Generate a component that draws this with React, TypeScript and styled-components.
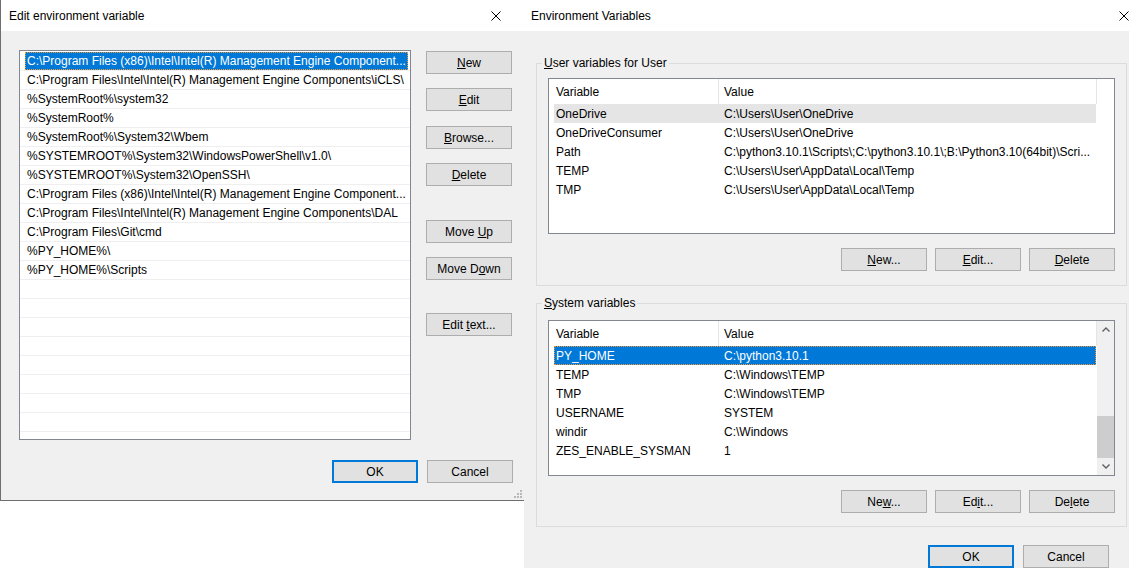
import * as React from 'react';
import styled, { createGlobalStyle, css } from 'styled-components';

const SANS = `"Liberation Sans", Arial, sans-serif`;

const GlobalStyle = createGlobalStyle`
  html, body {
    margin: 0;
    padding: 0;
    background: #fff;
    overflow: hidden;
  }
  body {
    font-family: ${SANS};
    font-size: 12px;
    color: #000;
  }
`;

const Desktop = styled.div`
  display: flex;
  align-items: flex-start;
  width: 1129px;
  height: 568px;
  overflow: hidden;
`;

/* ---------- shared window parts ---------- */

const TitleBar = styled.div<{ $padLeft: number; $padRight: number }>`
  height: 31px;
  flex: none;
  display: flex;
  align-items: center;
  justify-content: space-between;
  background: #fff;
  padding: 0 ${p => p.$padRight}px 0 ${p => p.$padLeft}px;
`;

const TitleText = styled.span`
  font-size: 12px;
  white-space: nowrap;
`;

const CloseGlyph = () => (
  <svg width="10" height="10" viewBox="0 0 10 10">
    <path d="M0.5 0.5 L9.5 9.5 M9.5 0.5 L0.5 9.5" stroke="#000" strokeWidth="1" fill="none" />
  </svg>
);

const Button = styled.button<{ $default?: boolean; $gapBefore?: number }>`
  width: 86px;
  height: 23px;
  flex: none;
  box-sizing: border-box;
  margin: ${p => p.$gapBefore ?? 0}px 0 0 0;
  padding: 0;
  background: #e1e1e1;
  border: 1px solid #adadad;
  color: #000;
  font-family: inherit;
  font-size: 12px;
  line-height: 1;
  ${p =>
    p.$default &&
    css`
      border: 2px solid #0078d7;
    `}
`;

const U = styled.span`
  text-decoration: underline;
  text-underline-offset: 1px;
`;

/* ---------- Edit environment variable ---------- */

const EditDialog = styled.div`
  width: 524px;
  flex: none;
  box-sizing: border-box;
  display: flex;
  flex-direction: column;
  border-left: 1px solid #6f6f6f;
  border-bottom: 1px solid #6f6f6f;
`;

const EditBody = styled.div`
  position: relative;
  height: 469px;
  box-sizing: border-box;
  background: #f0f0f0;
  padding: 19px 11px 0 18px;
`;

const EditMain = styled.div`
  display: flex;
  gap: 15px;
`;

const PathList = styled.div`
  width: 392px;
  height: 390px;
  box-sizing: border-box;
  border: 1px solid #828790;
  background: #fff;
  padding-top: 1px;
  overflow: hidden;
`;

const PathRow = styled.div`
  height: 18px;
  display: flex;
  padding: 0 2px 0 5px;
  border-bottom: 1px solid #efefef;
`;

const PathLabel = styled.div<{ $selected?: boolean }>`
  flex: 1;
  padding: 1px 0 0 2px;
  box-sizing: border-box;
  line-height: 17px;
  white-space: nowrap;
  overflow: hidden;
  ${p =>
    p.$selected &&
    css`
      background: #0078d7;
      color: #fff;
      outline: 1px dotted #f39a36;
      outline-offset: -1px;
    `}
`;

const SideButtons = styled.div`
  display: flex;
  flex-direction: column;
  padding-top: 1px;
`;

const Footer = styled.div<{ $top: number; $right: number }>`
  display: flex;
  justify-content: flex-end;
  gap: 9px;
  margin-top: ${p => p.$top}px;
  padding-right: ${p => p.$right}px;
`;

const Grip = styled.svg`
  position: absolute;
  right: 1px;
  bottom: 1px;
`;

const paths: string[] = [
  'C:\\Program Files (x86)\\Intel\\Intel(R) Management Engine Component...',
  'C:\\Program Files\\Intel\\Intel(R) Management Engine Components\\iCLS\\',
  '%SystemRoot%\\system32',
  '%SystemRoot%',
  '%SystemRoot%\\System32\\Wbem',
  '%SYSTEMROOT%\\System32\\WindowsPowerShell\\v1.0\\',
  '%SYSTEMROOT%\\System32\\OpenSSH\\',
  'C:\\Program Files (x86)\\Intel\\Intel(R) Management Engine Component...',
  'C:\\Program Files\\Intel\\Intel(R) Management Engine Components\\DAL',
  'C:\\Program Files\\Git\\cmd',
  '%PY_HOME%\\',
  '%PY_HOME%\\Scripts',
];

const pathRows = [...paths, ...Array(9).fill('')];

const EditEnvironmentVariable = () => (
  <EditDialog>
    <TitleBar $padLeft={8} $padRight={23}>
      <TitleText>Edit environment variable</TitleText>
      <CloseGlyph />
    </TitleBar>
    <EditBody>
      <EditMain>
        <PathList>
          {pathRows.map((p, i) => (
            <PathRow key={i}>
              <PathLabel $selected={i === 0}>{p}</PathLabel>
            </PathRow>
          ))}
        </PathList>
        <SideButtons>
          <Button><U>N</U>ew</Button>
          <Button $gapBefore={14}><U>E</U>dit</Button>
          <Button $gapBefore={15}><U>B</U>rowse...</Button>
          <Button $gapBefore={14}><U>D</U>elete</Button>
          <Button $gapBefore={34}>Move <U>U</U>p</Button>
          <Button $gapBefore={14}>Move D<U>o</U>wn</Button>
          <Button $gapBefore={33}>Edit <U>t</U>ext...</Button>
        </SideButtons>
      </EditMain>
      <Footer $top={20} $right={0}>
        <Button $default>OK</Button>
        <Button>Cancel</Button>
      </Footer>
      <Grip width="9" height="9" viewBox="0 0 9 9">
        {[
          [6, 0],
          [3, 3],
          [6, 3],
          [0, 6],
          [3, 6],
          [6, 6],
        ].map(([x, y]) => (
          <rect key={`${x}-${y}`} x={x} y={y} width="2" height="2" fill="#b8b8b8" />
        ))}
      </Grip>
    </EditBody>
  </EditDialog>
);

/* ---------- Environment Variables ---------- */

const EnvDialog = styled.div`
  flex: 1;
  height: 568px;
  display: flex;
  flex-direction: column;
`;

const EnvBody = styled.div`
  flex: 1;
  background: #f0f0f0;
  padding: 24px 2px 0 12px;
`;

const Group = styled.fieldset<{ $top: number; $bottom: number; $gapBefore?: number }>`
  margin: ${p => p.$gapBefore ?? 0}px 0 0 0;
  padding: ${p => p.$top}px 11px ${p => p.$bottom}px 11px;
  border: 1px solid #dcdcdc;
  min-width: 0;
`;

const Legend = styled.legend`
  margin-left: -6px;
  padding: 0 2px;
  line-height: 16px;
  font-size: 12px;
`;

const ListView = styled.div`
  height: 156px;
  box-sizing: border-box;
  border: 1px solid #828790;
  background: #fff;
  display: flex;
  overflow: hidden;
`;

const Table = styled.div`
  width: 548px;
  flex: none;
`;

const HeaderRow = styled.div`
  display: grid;
  grid-template-columns: 170px 1fr;
  height: 25px;
  box-sizing: border-box;
  border-right: 1px solid #e5e5e5;
`;

const HeaderCell = styled.div<{ $pad: number; $divider?: boolean }>`
  padding: 1px 0 0 ${p => p.$pad}px;
  line-height: 24px;
  ${p => p.$divider && 'border-right: 1px solid #e5e5e5;'}
`;

const VarRow = styled.div<{ $state?: 'hover' | 'selected' }>`
  display: grid;
  grid-template-columns: 165px 1fr;
  width: 542px;
  height: 19px;
  margin-left: 5px;
  white-space: nowrap;
  ${p =>
    p.$state === 'hover' &&
    css`
      background: #e5e5e5;
    `}
  ${p =>
    p.$state === 'selected' &&
    css`
      background: #0078d7;
      color: #fff;
      outline: 1px dotted #f39a36;
      outline-offset: -1px;
    `}
`;

const VarCell = styled.div<{ $pad: number }>`
  padding: 1px 0 0 ${p => p.$pad}px;
  line-height: 18px;
  overflow: hidden;
`;

const ScrollBar = styled.div`
  flex: 1;
  display: flex;
  flex-direction: column;
  background: #f0f0f0;
`;

const ScrollArrow = styled.div`
  height: 17px;
  display: flex;
  align-items: center;
  justify-content: center;
`;

const ScrollTrack = styled.div`
  flex: 1;
  display: flex;
  flex-direction: column;
  justify-content: flex-end;
`;

const ScrollThumb = styled.div`
  height: 42px;
  background: #cdcdcd;
`;

const GroupButtons = styled.div`
  display: flex;
  justify-content: flex-end;
  gap: 8px;
  margin-top: 14px;
`;

const Chevron = ({ up }: { up?: boolean }) => (
  <svg width="8" height="5" viewBox="0 0 8 5">
    <polyline
      points={up ? '0.5,4.5 4,1 7.5,4.5' : '0.5,0.5 4,4 7.5,0.5'}
      stroke="#606060"
      strokeWidth="1.4"
      fill="none"
    />
  </svg>
);

type Variable = { name: string; value: string; state?: 'hover' | 'selected' };

const userVars: Variable[] = [
  { name: 'OneDrive', value: 'C:\\Users\\User\\OneDrive', state: 'hover' },
  { name: 'OneDriveConsumer', value: 'C:\\Users\\User\\OneDrive' },
  { name: 'Path', value: 'C:\\python3.10.1\\Scripts\\;C:\\python3.10.1\\;B:\\Python3.10(64bit)\\Scri...' },
  { name: 'TEMP', value: 'C:\\Users\\User\\AppData\\Local\\Temp' },
  { name: 'TMP', value: 'C:\\Users\\User\\AppData\\Local\\Temp' },
];

const systemVars: Variable[] = [
  { name: 'PY_HOME', value: 'C:\\python3.10.1', state: 'selected' },
  { name: 'TEMP', value: 'C:\\Windows\\TEMP' },
  { name: 'TMP', value: 'C:\\Windows\\TEMP' },
  { name: 'USERNAME', value: 'SYSTEM' },
  { name: 'windir', value: 'C:\\Windows' },
  { name: 'ZES_ENABLE_SYSMAN', value: '1' },
];

const VariableList = ({ rows, scroll }: { rows: Variable[]; scroll?: boolean }) => (
  <ListView>
    <Table>
      <HeaderRow>
        <HeaderCell $pad={7} $divider>Variable</HeaderCell>
        <HeaderCell $pad={5}>Value</HeaderCell>
      </HeaderRow>
      {rows.map(r => (
        <VarRow key={r.name} $state={r.state}>
          <VarCell $pad={2}>{r.name}</VarCell>
          <VarCell $pad={5}>{r.value}</VarCell>
        </VarRow>
      ))}
    </Table>
    {scroll && (
      <ScrollBar>
        <ScrollArrow>
          <Chevron up />
        </ScrollArrow>
        <ScrollTrack>
          <ScrollThumb />
        </ScrollTrack>
        <ScrollArrow>
          <Chevron />
        </ScrollArrow>
      </ScrollBar>
    )}
  </ListView>
);

const EnvironmentVariables = () => (
  <EnvDialog>
    <TitleBar $padLeft={7} $padRight={0}>
      <TitleText>Environment Variables</TitleText>
      <CloseGlyph />
    </TitleBar>
    <EnvBody>
      <Group $top={7} $bottom={14}>
        <Legend>
          <U>U</U>ser variables for User
        </Legend>
        <VariableList rows={userVars} />
        <GroupButtons>
          <Button><U>N</U>ew...</Button>
          <Button><U>E</U>dit...</Button>
          <Button><U>D</U>elete</Button>
        </GroupButtons>
      </Group>
      <Group $top={9} $bottom={13} $gapBefore={9}>
        <Legend>
          <U>S</U>ystem variables
        </Legend>
        <VariableList rows={systemVars} scroll />
        <GroupButtons>
          <Button>Ne<U>w</U>...</Button>
          <Button>Ed<U>i</U>t...</Button>
          <Button>De<U>l</U>ete</Button>
        </GroupButtons>
      </Group>
      <Footer $top={18} $right={18}>
        <Button $default>OK</Button>
        <Button>Cancel</Button>
      </Footer>
    </EnvBody>
  </EnvDialog>
);

export default function App() {
  return (
    <>
      <GlobalStyle />
      <Desktop>
        <EditEnvironmentVariable />
        <EnvironmentVariables />
      </Desktop>
    </>
  );
}
